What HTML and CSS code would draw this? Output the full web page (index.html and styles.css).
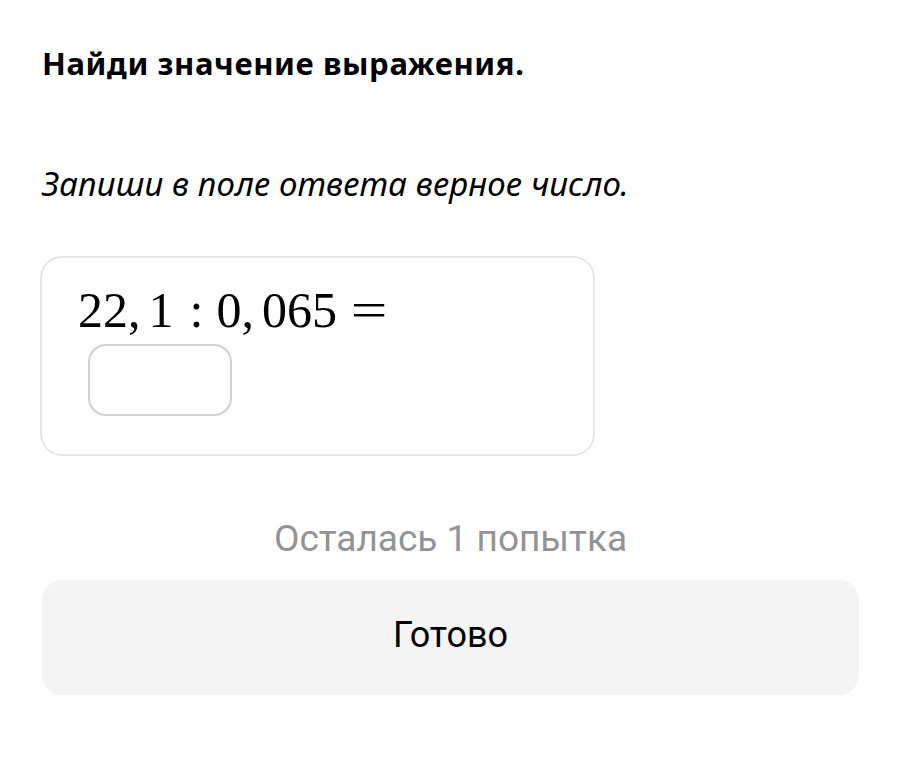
FILE: index.html
```html
<!DOCTYPE html>
<html lang="ru">
<head>
  <meta charset="UTF-8" />
  <meta name="viewport" content="width=device-width, initial-scale=1.0" />
  <title>Найди значение выражения</title>
  <link rel="stylesheet" href="styles.css">
</head>
<body>

  <h2 class="task-title">Найди значение выражения.</h2>

  <p class="task-hint">Запиши в поле ответа верное число.</p>

  <div class="task-card">
    <div class="expr">22,<span class="thin"></span>1<span class="op colon">:</span>0,<span class="thin"></span>065<span class="op eq">=</span></div>
    <input type="text" class="answer" aria-label="Ответ">
  </div>

  <p class="attempts">Осталась 1 попытка</p>

  <button class="done">Готово</button>

</body>
</html>
```

FILE: styles.css
```css
body {
  margin: 0;
  padding: 0 41px 0 42px;
  font-family: "Noto Sans", "Open Sans", sans-serif;
  background: #fff;
  color: #000;
}
.task-title {
  margin: 0;
  padding-top: 43px;
  font-size: 31px;
  font-weight: bold;
  letter-spacing: 0.6px;
  line-height: 40px;
}
.task-hint {
  margin: 0;
  padding-top: 79px;
  font-size: 33px;
  font-style: italic;
  letter-spacing: 0.1px;
  line-height: 44px;
}
.task-card {
  box-sizing: border-box;
  width: 555px;
  height: 200px;
  margin: 50px 0 0 -2px;
  padding: 24px 0 0 36px;
  border: 2px solid #e6e6e6;
  border-radius: 22px;
}
.expr {
  font-family: "Liberation Serif", "DejaVu Serif", serif;
  font-size: 50px;
  line-height: 56px;
}
.expr .thin {
  display: inline-block;
  width: 8px;
}
.expr .op {
  display: inline-block;
}
.expr .colon {
  margin: 0 13px 0 16px;
}
.expr .eq {
  margin-left: 18px;
  transform: scaleX(1.3);
}
.answer {
  display: block;
  box-sizing: border-box;
  width: 144px;
  height: 72px;
  margin: 6px 0 0 10px;
  border: 2px solid #d2d2d2;
  border-radius: 18px;
  background: #fff;
}
.attempts {
  margin: 0;
  padding-top: 61px;
  text-align: center;
  color: #939393;
  font-family: Roboto, "Noto Sans", sans-serif;
  font-size: 37px;
  line-height: 44px;
}
.done {
  display: block;
  width: 100%;
  height: 115px;
  margin-top: 19px;
  padding: 0 0 6px;
  border: none;
  border-radius: 20px;
  background: #f4f4f4;
  color: #000;
  font-family: Roboto, "Noto Sans", sans-serif;
  font-size: 36px;
  cursor: pointer;
}
```
